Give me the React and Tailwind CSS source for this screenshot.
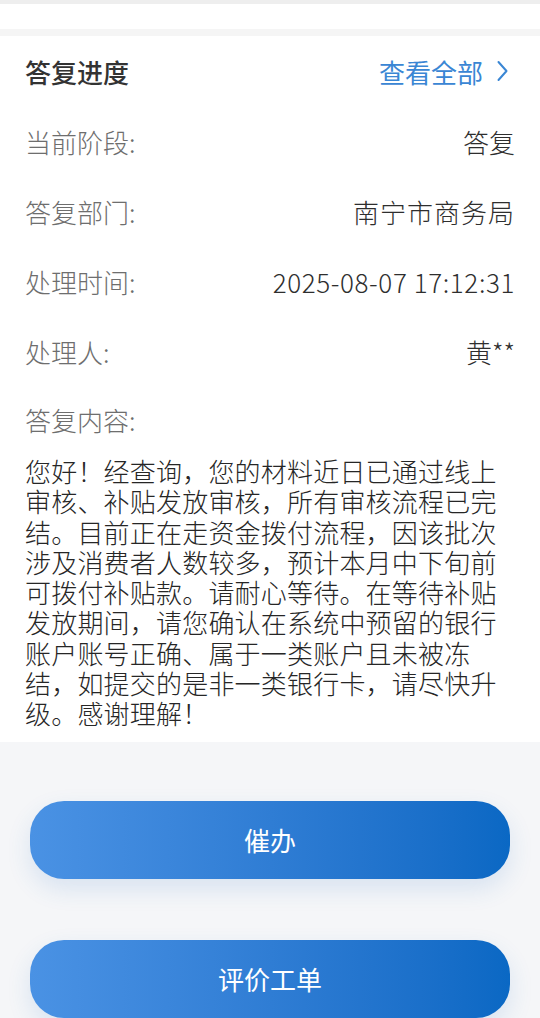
import React from "react";

const font = { fontFamily: '"Noto Sans CJK SC", "Noto Sans", sans-serif' };

function Row({ label, value, valueClass = "" }) {
  return (
    <div className="flex h-[70px] items-center justify-between">
      <span className="text-[26px] font-light text-[#6e6e6e]">{label}</span>
      <span className={"text-[26px] font-light text-[#2e2e2e] " + valueClass}>{value}</span>
    </div>
  );
}

export default function App() {
  return (
    <div className="min-h-[1018px] w-[540px] overflow-hidden bg-[#f5f6f8]" style={font}>
      <div className="h-[4px] bg-[#eeeeee]" />
      <div className="h-[25px] bg-white" />
      <div className="h-[7px] bg-[#f5f5f5]" />
      <div className="bg-white px-[25px] pb-[13px]">
        <div className="flex h-[70px] items-center justify-between">
          <span className="text-[26px] font-medium text-[#333333]">答复进度</span>
          <span className="flex items-center text-[26px] text-[#3a86d4]">
            查看全部
            <svg className="ml-[14px] mr-[7px]" width="11" height="22" viewBox="0 0 11 22" fill="none">
              <path d="M1.5 2 L9.5 11 L1.5 20" stroke="#3a86d4" strokeWidth="2" strokeLinecap="round" strokeLinejoin="round" />
            </svg>
          </span>
        </div>
        <Row label="当前阶段:" value="答复" />
        <Row label="答复部门:" value="南宁市商务局" valueClass="tracking-[1px]" />
        <Row label="处理时间:" value="2025-08-07 17:12:31" valueClass="tracking-[0.6px]" />
        <Row label="处理人:" value="黄**" />
        <div className="flex h-[66px] items-center">
          <span className="text-[26px] font-light text-[#6e6e6e]">答复内容:</span>
        </div>
        <p className="mt-[4px] text-[26px] font-light leading-[30.3px] tracking-[0.2px] text-[#262626]">
          您好！经查询，您的材料近日已通过线上审核、补贴发放审核，所有审核流程已完结。目前正在走资金拨付流程，因该批次涉及消费者人数较多，预计本月中下旬前可拨付补贴款。请耐心等待。在等待补贴发放期间，请您确认在系统中预留的银行账户账号正确、属于一类账户且未被冻结，如提交的是非一类银行卡，请尽快升级。感谢理解！
        </p>
      </div>
      <div className="flex flex-col gap-[61px] px-[30px] pt-[59px]">
        <button className="flex h-[78px] w-full items-center justify-center rounded-[34px] bg-gradient-to-r from-[#4a92e4] to-[#0a68c4] text-[26px] text-white shadow-[0_10px_24px_rgba(40,110,200,0.14)]">
          催办
        </button>
        <button className="flex h-[78px] w-full items-center justify-center rounded-[34px] bg-gradient-to-r from-[#4a92e4] to-[#0a68c4] text-[26px] text-white shadow-[0_10px_24px_rgba(40,110,200,0.14)]">
          评价工单
        </button>
      </div>
    </div>
  );
}
